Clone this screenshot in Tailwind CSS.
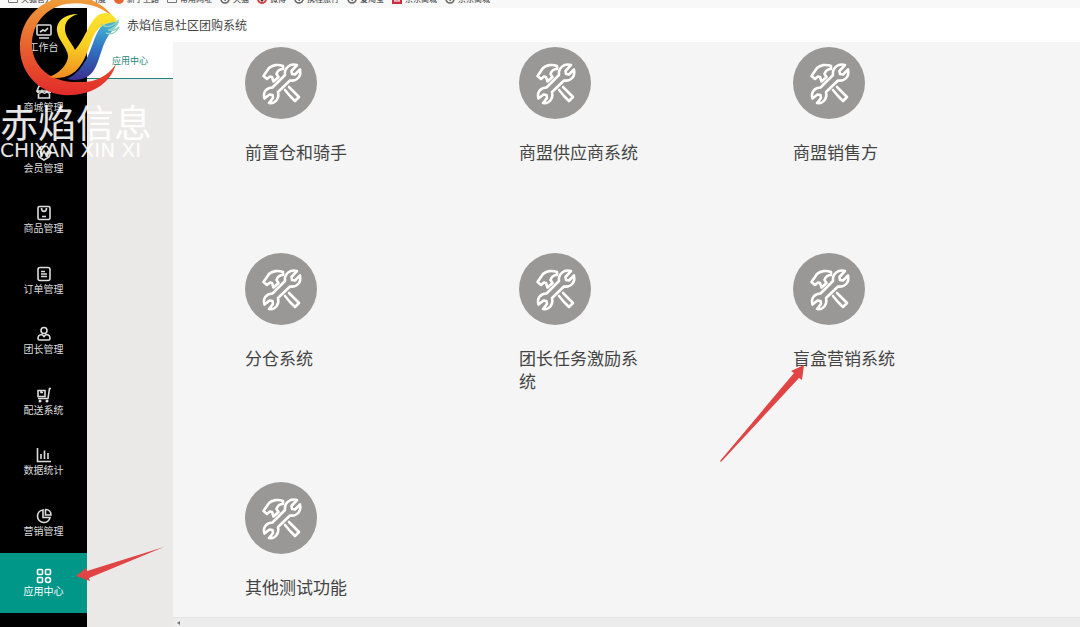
<!DOCTYPE html>
<html lang="zh-CN">
<head>
    <meta charset="UTF-8">
    <meta name="viewport" content="width=device-width, initial-scale=1.0">
    <script src="https://cdn.jsdelivr.net/npm/@tailwindcss/browser@4"></script>
    <title>赤焰信息社区团购系统</title>
</head>
<body class="bg-white font-['Noto_Sans_CJK_SC',sans-serif] text-[#444]">
    <!-- shared symbols -->
    <svg class="hidden">
        <symbol id="tools" viewBox="0 0 72 72" fill="none" stroke="#fff" stroke-width="2.6" stroke-linejoin="round" stroke-linecap="round">
            <path d="M38 19C33 17 27 18 24 21L18.500 29l3.500 3 3-2.500 2 .5 1.500 4.500 5-4.500-2-3c1-3 3-5 6.500-5z"/>
            <path d="M52 18l-5.500 6 .5 3 3 .5 5-5c1.500 7-3 12-10 11L33 45c1.500 7-3 12-9 11l4-5-.5-3-3-.5-5 4c-2-6 2-11 8-11L40 28c-1-7 5-12 12-10z"/>
            <path d="M44 40l10 10-4 4-5-5M40 43l5 6"/>
        </symbol>
        <symbol id="globe" viewBox="0 0 10 10" fill="none" stroke="#666" stroke-width="1.6">
            <circle cx="5" cy="5" r="4"/><path d="M3 3l3 1-1 3"/>
        </symbol>
        <symbol id="folder" viewBox="0 0 10 10" fill="none" stroke="#777" stroke-width="1">
            <path d="M.5 8.500V2h3l1 1h5v5.500z"/>
        </symbol>
    </svg>

    <div class="flex flex-col min-h-screen">
        <!-- bookmarks -->
        <nav class="flex items-end gap-2 h-2 pb-1 pl-2 overflow-hidden whitespace-nowrap bg-[#f8f8f8] text-[8px] leading-[10px] text-[#333]">
            <a href="#" class="flex gap-[3px]"><svg class="size-[10px]"><use href="#folder"/></svg>火狐官方站点</a>
            <a href="#" class="flex gap-[3px]"><svg class="size-[10px]" viewBox="0 0 10 10"><circle cx="5" cy="6" r="3" fill="#4a6fd0"/></svg>百度</a>
            <a href="#" class="flex gap-[3px]"><svg class="size-[10px]" viewBox="0 0 10 10"><circle cx="5" cy="5" r="5" fill="#e8642c"/></svg>新手上路</a>
            <a href="#" class="flex gap-[3px]"><svg class="size-[10px]"><use href="#folder"/></svg>常用网址</a>
            <a href="#" class="flex gap-[3px]"><svg class="size-[10px]"><use href="#globe"/></svg>天猫</a>
            <a href="#" class="flex gap-[3px]"><svg class="size-[10px]" viewBox="0 0 10 10"><circle cx="5" cy="5" r="4" fill="#fff" stroke="#d33c3c" stroke-width="2"/><circle cx="5" cy="6" r="1.500" fill="#333"/></svg>微博</a>
            <a href="#" class="flex gap-[3px]"><svg class="size-[10px]"><use href="#globe"/></svg>携程旅行</a>
            <a href="#" class="flex gap-[3px]"><svg class="size-[10px]"><use href="#globe"/></svg>爱淘宝</a>
            <a href="#" class="flex gap-[3px]"><svg class="size-[10px]" viewBox="0 0 10 10"><path d="M0 0h10v10H0z" fill="#cb2e3e"/><path d="M2 7h6M3 3v4M7 3v4" stroke="#fff"/></svg>京东商城</a>
            <a href="#" class="flex gap-[3px]"><svg class="size-[10px]"><use href="#globe"/></svg>京东商城</a>
        </nav>

        <div class="flex flex-1">
            <!-- main menu -->
            <aside class="w-[87px] shrink-0 bg-black text-[10px] leading-3 text-[#ddd]">
                <nav class="grid grid-rows-10 h-[605px] [&>a]:flex [&>a]:flex-col [&>a]:items-center [&>a]:justify-center [&>a]:gap-px [&_svg]:size-4 [&_svg]:fill-none [&_svg]:stroke-current [&_svg]:stroke-[1.6]">
                    <a href="#"><svg viewBox="0 0 16 16"><rect x="1" y="1" width="14" height="10" rx="1"/><path d="M4 8l3-2 2 1 3-3M3 14h10"/></svg>工作台</a>
                    <a href="#"><svg viewBox="0 0 16 16"><path d="M3 2h10l2 5H1zM2.500 7v7h11V7M1 7c1 3 4 3 5 0 1 3 4 3 5 0 1 3 3 3 4 0"/></svg>商城管理</a>
                    <a href="#"><svg viewBox="0 0 16 16"><path d="M5 1.500h6L15 7l-2 5-5 3-5-3-2-5zM4 6l2 4 2-4 2 4 2-4"/></svg>会员管理</a>
                    <a href="#"><svg viewBox="0 0 16 16"><rect x="2" y="1.500" width="12" height="13" rx="1.500"/><path d="M5.500 3c0 4.500 5 4.500 5 0M6 11.500h4"/></svg>商品管理</a>
                    <a href="#"><svg viewBox="0 0 16 16"><rect x="2" y="1.500" width="12" height="13" rx="2"/><path d="M5 5.500h4M5 8h6M5 10.500h6"/></svg>订单管理</a>
                    <a href="#"><svg viewBox="0 0 16 16"><circle cx="8" cy="4.500" r="3"/><path d="M6 8.500c-3 0-4 2-4 4 0 1 .5 1.500 1.500 1.500h9c1 0 1.500-.5 1.500-1.500 0-2-1-4-4-4l-2 2z"/></svg>团长管理</a>
                    <a href="#"><svg viewBox="0 0 16 16"><path d="M15 1.500h-1.500L12 11.500H2M2 3.500h7v6H2zM5 3.500v2h2"/><circle cx="4" cy="14" r=".7"/><circle cx="11" cy="14" r=".7"/></svg>配送系统</a>
                    <a href="#"><svg viewBox="0 0 16 16"><path d="M1.500 1v13.500H15M5 7v5M8.500 3.500V12M12 6v6"/></svg>数据统计</a>
                    <a href="#"><svg viewBox="0 0 16 16"><path d="M7 2a6.300 6.300 0 1 0 7 7.500H7zM9.500 1.500v5.500H15c0-3-2-5.500-5.500-5.500z"/></svg>营销管理</a>
                    <a href="#" class="bg-[#009688] text-white"><svg viewBox="0 0 16 16"><rect x="1.500" y="1.500" width="5" height="5" rx="1"/><rect x="9.500" y="1.500" width="5" height="5" rx="1"/><rect x="1.500" y="9.500" width="5" height="5" rx="1"/><circle cx="12" cy="12" r="2.500"/></svg>应用中心</a>
                </nav>
            </aside>

            <div class="flex flex-col flex-1">
                <header class="h-[34px] pl-10 bg-white">
                    <h1 class="text-[12px] leading-[34px]">赤焰信息社区团购系统</h1>
                </header>
                <div class="flex flex-1">
                    <aside class="w-[86px] shrink-0 bg-[#eae9e7]">
                        <a href="#" class="block h-[37px] border-b border-[#1c8478] bg-white text-center text-[9px] leading-[37px] text-[#1c8478]">应用中心</a>
                    </aside>
                    <main class="flex flex-col flex-1 bg-[#f5f5f5]">
                        <div class="grid grid-cols-3 content-start gap-y-[90px] flex-1 pt-[5px] pl-[72px] pr-[13px] text-[17px] leading-[23px]">
                            <a href="#" class="flex flex-col gap-[21px] w-[127px]"><svg class="size-[72px] rounded-full bg-[#999896]"><use href="#tools"/></svg>前置仓和骑手</a>
                            <a href="#" class="flex flex-col gap-[21px] w-[127px]"><svg class="size-[72px] rounded-full bg-[#999896]"><use href="#tools"/></svg>商盟供应商系统</a>
                            <a href="#" class="flex flex-col gap-[21px] w-[127px]"><svg class="size-[72px] rounded-full bg-[#999896]"><use href="#tools"/></svg>商盟销售方</a>
                            <a href="#" class="flex flex-col gap-[21px] w-[127px]"><svg class="size-[72px] rounded-full bg-[#999896]"><use href="#tools"/></svg>分仓系统</a>
                            <a href="#" class="flex flex-col gap-[21px] w-[127px]"><svg class="size-[72px] rounded-full bg-[#999896]"><use href="#tools"/></svg>团长任务激励系统</a>
                            <a href="#" class="flex flex-col gap-[21px] w-[127px]"><svg class="size-[72px] rounded-full bg-[#999896]"><use href="#tools"/></svg>盲盒营销系统</a>
                            <a href="#" class="flex flex-col gap-[21px] w-[127px]"><svg class="size-[72px] rounded-full bg-[#999896]"><use href="#tools"/></svg>其他测试功能</a>
                        </div>
                        <div class="flex items-center h-[10px] pl-1 bg-[#ececec] border-t border-[#e4e4e4]">
                            <svg class="size-1" viewBox="0 0 4 4"><path d="M3 0v4L0 2z" fill="#777"/></svg>
                        </div>
                    </main>
                </div>
            </div>
        </div>
    </div>

    <!-- watermark -->
    <div class="absolute left-0 top-0 w-[160px] pointer-events-none whitespace-nowrap text-white/90">
        <svg class="w-[130px] h-[104px]" viewBox="0 0 130 104">
            <defs>
                <linearGradient id="ring" x1="0" y1="0" x2="0" y2="1"><stop offset="0" stop-color="#f0a03a"/><stop offset=".5" stop-color="#e8622f"/><stop offset="1" stop-color="#e22b2b"/></linearGradient>
                <linearGradient id="gold" x1="0" y1="0" x2="0" y2="1"><stop offset="0" stop-color="#fde32c"/><stop offset=".5" stop-color="#f8cf22"/><stop offset="1" stop-color="#ef8a22"/></linearGradient>
                <linearGradient id="blue" x1="0" y1="0" x2="0" y2="1"><stop offset="0" stop-color="#45b7d8"/><stop offset=".5" stop-color="#2f6fc0"/><stop offset="1" stop-color="#3a2f8e"/></linearGradient>
            </defs>
            <path d="M113 17C102 1 82-6 60-2 35 3 19 24 20 49c1 28 24 48 52 46 22-1 39-13 44-31-9 13-22 19-37 18-26 1-45-13-47-35C31 25 45 8 66 4c18-3 35 2 47 13z" fill="url(#ring)"/>
            <path d="M119 22c-9-1-15 1-19 6-6 9-8 20-13 30-5 9-11 17-20 21 12 3 22-1 27-9 6-10 7-22 13-32 3-6 7-8 12-16z" fill="url(#blue)"/>
            <path d="M78 14C65 14 56 21 57 31c1 9 10 16 11 25 0 8-8 17-19 21 12 3 24-1 31-11 7-9 9-21 14-31 4-8 12-13 23-13-2-9-13-12-20-6-8 7-13 24-22 34-3-7-11-14-10-23 1-7 6-11 13-13z" fill="url(#gold)"/>
            <path d="M101 24c5 4 11 3 17-3-1 5-5 8-10 9 4 1 8 0 11-3-3 6-8 8-13 6" fill="none" stroke="#8fd0bc" stroke-width="1.500"/>
        </svg>
        <div class="text-[38px] leading-[34px]">赤焰信息</div>
        <div class="font-['DejaVu_Sans',sans-serif] text-[20px] leading-6">CHIYAN XIN XI</div>
    </div>

    <!-- pointer arrows -->
    <svg class="absolute left-[76px] top-[546px] w-[88px] h-[36px] pointer-events-none" viewBox="0 0 88 36">
        <path d="M0 30L10 22l1 3L88 1 13 32l1 3z" fill="#e04444"/>
    </svg>
    <svg class="absolute left-[718px] top-[364px] w-[88px] h-[100px] pointer-events-none" viewBox="0 0 88 100">
        <path d="M86 1L73 7l3 2L2 97l1 1L81 14l3 2z" fill="#e04444"/>
    </svg>
</body>
</html>
